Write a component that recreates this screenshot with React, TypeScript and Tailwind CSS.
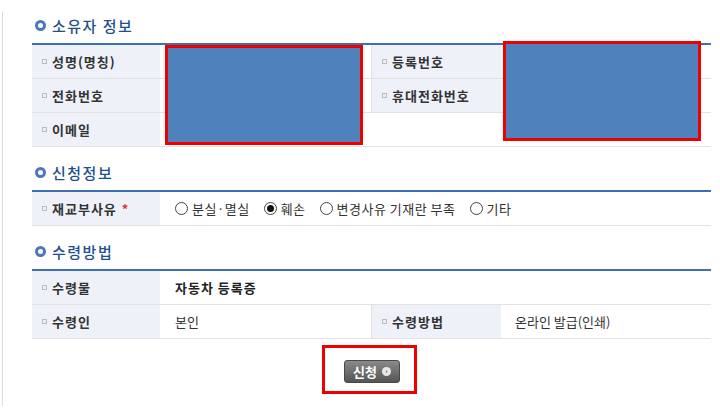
import React from "react"

const font = { fontFamily: '"Noto Sans CJK KR", "Noto Sans", sans-serif' }

function Heading({ title }: { title: string }) {
  return (
    <div className="flex h-[20px] items-center gap-[6px] pl-[3px]">
      <span className="box-border h-[11px] w-[11px] rounded-full border-[3px] border-[#4a78b8] bg-white" />
      <span className="text-[15px] font-medium leading-none tracking-[1.5px] text-[#1f4f8f]">{title}</span>
    </div>
  )
}

function Label({ text, required }: { text: string; required?: boolean }) {
  return (
    <div className="flex h-full items-center gap-[5px] bg-[#eef2f8] pl-[10px]">
      <span className="box-border h-[5px] w-[5px] border border-[#b8bcc4] bg-[#eef0f4]" />
      <span className="text-[13px] font-bold tracking-[1px] text-[#333]">{text}</span>
      {required && <span className="text-[13px] font-bold text-[#e0322b]">*</span>}
    </div>
  )
}

function Radio({ label, checked }: { label: string; checked?: boolean }) {
  return (
    <label className="flex items-center gap-[4px]">
      <span className="flex h-[13px] w-[13px] items-center justify-center rounded-full border border-[#444] bg-white">
        {checked && <span className="h-[7px] w-[7px] rounded-full bg-[#111]" />}
      </span>
      <span className="text-[13px] tracking-[0.5px] text-[#333]">{label}</span>
    </label>
  )
}

const row = "grid h-[34px] grid-cols-[128px_211px_130px_210px] border-b border-[#e2e2e2]"

export default function App() {
  return (
    <div className="relative h-[411px] w-[720px] overflow-hidden bg-white" style={font}>
      <div className="absolute left-[2px] top-[12px] h-[394px] w-[1px] bg-[#dcdcdc]" />

      <div className="pl-[32px] pt-[15px]">
        {/* 소유자 정보 */}
        <Heading title="소유자 정보" />
        <div className="mt-[8px] w-[679px] border-t-2 border-[#3f6fb3]">
          <div className={row}>
            <Label text="성명(명칭)" />
            <div />
            <div className="border-l border-[#e2e2e2]">
              <Label text="등록번호" />
            </div>
            <div />
          </div>
          <div className={row}>
            <Label text="전화번호" />
            <div />
            <div className="border-l border-[#e2e2e2]">
              <Label text="휴대전화번호" />
            </div>
            <div />
          </div>
          <div className={row}>
            <Label text="이메일" />
            <div />
            <div />
            <div />
          </div>
        </div>

        {/* 신청정보 */}
        <div className="mt-[15px]">
          <Heading title="신청정보" />
        </div>
        <div className="mt-[8px] w-[679px] border-t-2 border-[#3f6fb3]">
          <div className="grid h-[34px] grid-cols-[128px_551px] border-b border-[#e2e2e2]">
            <Label text="재교부사유" required />
            <div className="flex items-center gap-[14px] pl-[15px]">
              <Radio label="분실·멸실" />
              <Radio label="훼손" checked />
              <Radio label="변경사유 기재란 부족" />
              <Radio label="기타" />
            </div>
          </div>
        </div>

        {/* 수령방법 */}
        <div className="mt-[15px]">
          <Heading title="수령방법" />
        </div>
        <div className="mt-[8px] w-[679px] border-t-2 border-[#3f6fb3]">
          <div className="grid h-[34px] grid-cols-[128px_551px] border-b border-[#e2e2e2]">
            <Label text="수령물" />
            <div className="flex items-center pl-[15px] text-[13px] font-bold tracking-[1px] text-[#222]">
              자동차 등록증
            </div>
          </div>
          <div className={row}>
            <Label text="수령인" />
            <div className="flex items-center pl-[15px] text-[13px] text-[#333]">본인</div>
            <div className="border-l border-[#e2e2e2]">
              <Label text="수령방법" />
            </div>
            <div className="flex items-center pl-[14px] text-[13px] text-[#333]">온라인 발급(인쇄)</div>
          </div>
        </div>

        <div className="flex w-[679px] justify-center pt-[21px]">
          <button className="ml-[1px] flex h-[23px] w-[56px] items-center justify-center gap-[5px] rounded-[3px] border border-[#4a4a4a] bg-gradient-to-b from-[#8a8a8a] to-[#555] text-[13px] font-bold text-white">
            신청
            <span className="flex h-[9px] w-[9px] items-center justify-center rounded-full bg-[#e8e8e8] text-[7px] leading-none text-[#555]">
              ›
            </span>
          </button>
        </div>
      </div>

      {/* annotation overlays */}
      <div className="absolute left-[165px] top-[45px] h-[100px] w-[198px] border-[3px] border-[#ee0000] bg-[#4f81bd]" />
      <div className="absolute left-[503px] top-[41px] h-[100px] w-[198px] border-[3px] border-[#ee0000] bg-[#4f81bd]" />
      <div className="absolute left-[322px] top-[345px] h-[49px] w-[95px] border-[3px] border-[#ee0000]" />
    </div>
  )
}
